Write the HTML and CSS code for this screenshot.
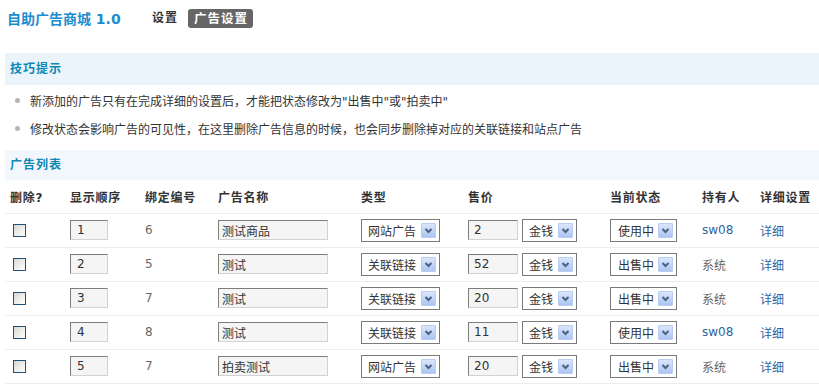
FILE: index.html
```html
<!DOCTYPE html>
<html lang="zh-CN">
<head>
<meta charset="utf-8">
<title>自助广告商城</title>
<link rel="stylesheet" href="styles.css">
</head>
<body>
<div class="page">
  <header class="topbar">
    <h1 class="brand">自助广告商城 1.0</h1>
    <nav class="nav">
      <a class="nav-item">设置</a>
      <a class="nav-item active">广告设置</a>
    </nav>
  </header>

  <h2 class="section-bar tips-bar">技巧提示</h2>
  <ul class="tips">
    <li>新添加的广告只有在完成详细的设置后，才能把状态修改为"出售中"或"拍卖中"</li>
    <li>修改状态会影响广告的可见性，在这里删除广告信息的时候，也会同步删除掉对应的关联链接和站点广告</li>
  </ul>

  <h2 class="section-bar list-bar">广告列表</h2>
  <table class="ads">
    <colgroup>
      <col class="c-del"><col class="c-order"><col class="c-bind"><col class="c-name"><col class="c-type"><col class="c-price"><col class="c-status"><col class="c-owner"><col class="c-detail">
    </colgroup>
    <thead>
      <tr><th>删除?</th><th>显示顺序</th><th>绑定编号</th><th>广告名称</th><th>类型</th><th>售价</th><th>当前状态</th><th>持有人</th><th>详细设置</th></tr>
    </thead>
    <tbody>
      <tr>
        <td><span class="chk"></span></td>
        <td><input class="inp inp-order" value="1"></td>
        <td class="num">6</td>
        <td><input class="inp inp-name" value="测试商品"></td>
        <td><span class="sel sel-type"><span>网站广告</span><span class="arr"><svg viewBox="0 0 13 13"><path d="M3.5 5 L6.5 8 L9.5 5"/></svg></span></span></td>
        <td><span class="price"><input class="inp inp-price" value="2"><span class="sel sel-cur"><span>金钱</span><span class="arr"><svg viewBox="0 0 13 13"><path d="M3.5 5 L6.5 8 L9.5 5"/></svg></span></span></span></td>
        <td><span class="sel sel-status"><span>使用中</span><span class="arr"><svg viewBox="0 0 13 13"><path d="M3.5 5 L6.5 8 L9.5 5"/></svg></span></span></td>
        <td><a class="link latin">sw08</a></td>
        <td><a class="link">详细</a></td>
      </tr>
      <tr>
        <td><span class="chk"></span></td>
        <td><input class="inp inp-order" value="2"></td>
        <td class="num">5</td>
        <td><input class="inp inp-name" value="测试"></td>
        <td><span class="sel sel-type"><span>关联链接</span><span class="arr"><svg viewBox="0 0 13 13"><path d="M3.5 5 L6.5 8 L9.5 5"/></svg></span></span></td>
        <td><span class="price"><input class="inp inp-price" value="52"><span class="sel sel-cur"><span>金钱</span><span class="arr"><svg viewBox="0 0 13 13"><path d="M3.5 5 L6.5 8 L9.5 5"/></svg></span></span></span></td>
        <td><span class="sel sel-status"><span>出售中</span><span class="arr"><svg viewBox="0 0 13 13"><path d="M3.5 5 L6.5 8 L9.5 5"/></svg></span></span></td>
        <td class="sys">系统</td>
        <td><a class="link">详细</a></td>
      </tr>
      <tr>
        <td><span class="chk"></span></td>
        <td><input class="inp inp-order" value="3"></td>
        <td class="num">7</td>
        <td><input class="inp inp-name" value="测试"></td>
        <td><span class="sel sel-type"><span>关联链接</span><span class="arr"><svg viewBox="0 0 13 13"><path d="M3.5 5 L6.5 8 L9.5 5"/></svg></span></span></td>
        <td><span class="price"><input class="inp inp-price" value="20"><span class="sel sel-cur"><span>金钱</span><span class="arr"><svg viewBox="0 0 13 13"><path d="M3.5 5 L6.5 8 L9.5 5"/></svg></span></span></span></td>
        <td><span class="sel sel-status"><span>出售中</span><span class="arr"><svg viewBox="0 0 13 13"><path d="M3.5 5 L6.5 8 L9.5 5"/></svg></span></span></td>
        <td class="sys">系统</td>
        <td><a class="link">详细</a></td>
      </tr>
      <tr>
        <td><span class="chk"></span></td>
        <td><input class="inp inp-order" value="4"></td>
        <td class="num">8</td>
        <td><input class="inp inp-name" value="测试"></td>
        <td><span class="sel sel-type"><span>关联链接</span><span class="arr"><svg viewBox="0 0 13 13"><path d="M3.5 5 L6.5 8 L9.5 5"/></svg></span></span></td>
        <td><span class="price"><input class="inp inp-price" value="11"><span class="sel sel-cur"><span>金钱</span><span class="arr"><svg viewBox="0 0 13 13"><path d="M3.5 5 L6.5 8 L9.5 5"/></svg></span></span></span></td>
        <td><span class="sel sel-status"><span>使用中</span><span class="arr"><svg viewBox="0 0 13 13"><path d="M3.5 5 L6.5 8 L9.5 5"/></svg></span></span></td>
        <td><a class="link latin">sw08</a></td>
        <td><a class="link">详细</a></td>
      </tr>
      <tr>
        <td><span class="chk"></span></td>
        <td><input class="inp inp-order" value="5"></td>
        <td class="num">7</td>
        <td><input class="inp inp-name" value="拍卖测试"></td>
        <td><span class="sel sel-type"><span>网站广告</span><span class="arr"><svg viewBox="0 0 13 13"><path d="M3.5 5 L6.5 8 L9.5 5"/></svg></span></span></td>
        <td><span class="price"><input class="inp inp-price" value="20"><span class="sel sel-cur"><span>金钱</span><span class="arr"><svg viewBox="0 0 13 13"><path d="M3.5 5 L6.5 8 L9.5 5"/></svg></span></span></span></td>
        <td><span class="sel sel-status"><span>出售中</span><span class="arr"><svg viewBox="0 0 13 13"><path d="M3.5 5 L6.5 8 L9.5 5"/></svg></span></span></td>
        <td class="sys">系统</td>
        <td><a class="link">详细</a></td>
      </tr>
    </tbody>
  </table>
</div>
</body>
</html>
```

FILE: styles.css
```css
* { box-sizing: border-box; }
html, body {
  margin: 0;
  padding: 0;
  background: #fff;
}
body {
  font-family: "DejaVu Sans", "Noto Sans CJK SC", sans-serif;
  font-size: 12px;
  color: #333;
  overflow: hidden;
}
.page {
  padding-left: 5px;
}
.topbar {
  display: flex;
  align-items: center;
  height: 45px;
  padding: 0 0 8px 2px;
  margin-bottom: 8px;
}
.brand {
  margin: 0;
  font-size: 14px;
  font-weight: bold;
  color: #1b8dcf;
  line-height: 22px;
  width: 145px;
  white-space: nowrap;
}
.nav {
  display: flex;
  align-items: center;
  gap: 10px;
}
.nav-item {
  font-size: 12px;
  letter-spacing: 1px;
  font-weight: bold;
  color: #333;
  line-height: 19px;
  height: 19px;
}
.nav-item.active {
  background: #666;
  color: #fff;
  padding: 0 5px 0 6px;
  border-radius: 3px;
  font-size: 12.5px;
}
.section-bar {
  margin: 0;
  font-size: 12px;
  letter-spacing: 1px;
  font-weight: bold;
  color: #0e88b4;
  padding-left: 5px;
}
.tips-bar {
  background: #ebf4fb;
  height: 32px;
  line-height: 32px;
}
.list-bar {
  background: #f1f7fc;
  height: 30px;
  line-height: 30px;
}
.tips {
  list-style: none;
  margin: 0;
  padding: 1px 0 8px 0;
}
.tips li {
  display: flex;
  align-items: center;
  height: 28px;
  color: #333;
  white-space: nowrap;
}
.tips li::before {
  content: "";
  width: 5px;
  height: 5px;
  border-radius: 50%;
  background: #b4b4b4;
  margin: 0 10px 0 10px;
  flex: none;
}
.ads {
  width: 814px;
  border-collapse: collapse;
  table-layout: fixed;
}
.c-del { width: 60px; }
.c-order { width: 75px; }
.c-bind { width: 73px; }
.c-name { width: 143px; }
.c-type { width: 107px; }
.c-price { width: 142px; }
.c-status { width: 92px; }
.c-owner { width: 58px; }
.c-detail { width: 64px; }
.ads th, .ads td {
  text-align: left;
  padding: 0 0 0 5px;
  border-bottom: 1px solid #ececec;
  vertical-align: middle;
  white-space: nowrap;
}
.ads th {
  height: 33px;
  font-weight: bold;
  letter-spacing: 0.75px;
  color: #333;
}
.ads td {
  height: 34px;
}
.num, .sys {
  color: #666;
}
.chk {
  display: block;
  width: 13px;
  height: 13px;
  margin-left: 3px;
  border: 1px solid #1c5180;
  background: linear-gradient(135deg, #d8d8d2 0%, #f4f4f1 70%, #fff 100%);
}
.inp {
  display: inline-block;
  height: 20px;
  margin: 0;
  padding: 0 5px;
  border-style: solid;
  border-width: 1px;
  border-color: #7d7d7d #d2d2d2 #d2d2d2 #7d7d7d;
  background: #f5f5f5;
  font: inherit;
  color: #333;
  vertical-align: middle;
  outline: none;
}
.inp-order { width: 38px; padding-left: 6px; }
.inp-name { width: 110px; padding-left: 3px; }
.inp-price { width: 50px; padding-left: 5px; }
.price {
  display: flex;
  align-items: center;
  gap: 4px;
}
.sel {
  display: inline-flex;
  align-items: center;
  justify-content: space-between;
  height: 23px;
  border: 1px solid #7a7a7a;
  background: #fff;
  padding: 0 3px 0 6px;
  color: #333;
  vertical-align: middle;
}
.sel-type { width: 79px; }
.sel-cur { width: 55px; }
.sel-status { width: 67px; padding-left: 7px; }
.arr {
  display: block;
  width: 15px;
  height: 15px;
  border: 1px solid #b9cdf2;
  border-radius: 1px;
  background: linear-gradient(180deg, #dbe6fb 0%, #bed2f6 60%, #adc5f1 100%);
}
.arr svg {
  display: block;
  width: 13px;
  height: 13px;
}
.arr path {
  fill: none;
  stroke: #4d6185;
  stroke-width: 2;
}
.link {
  color: #2f64a0;
  text-decoration: none;
}
.latin {
  font-family: "DejaVu Sans", sans-serif;
}
```
